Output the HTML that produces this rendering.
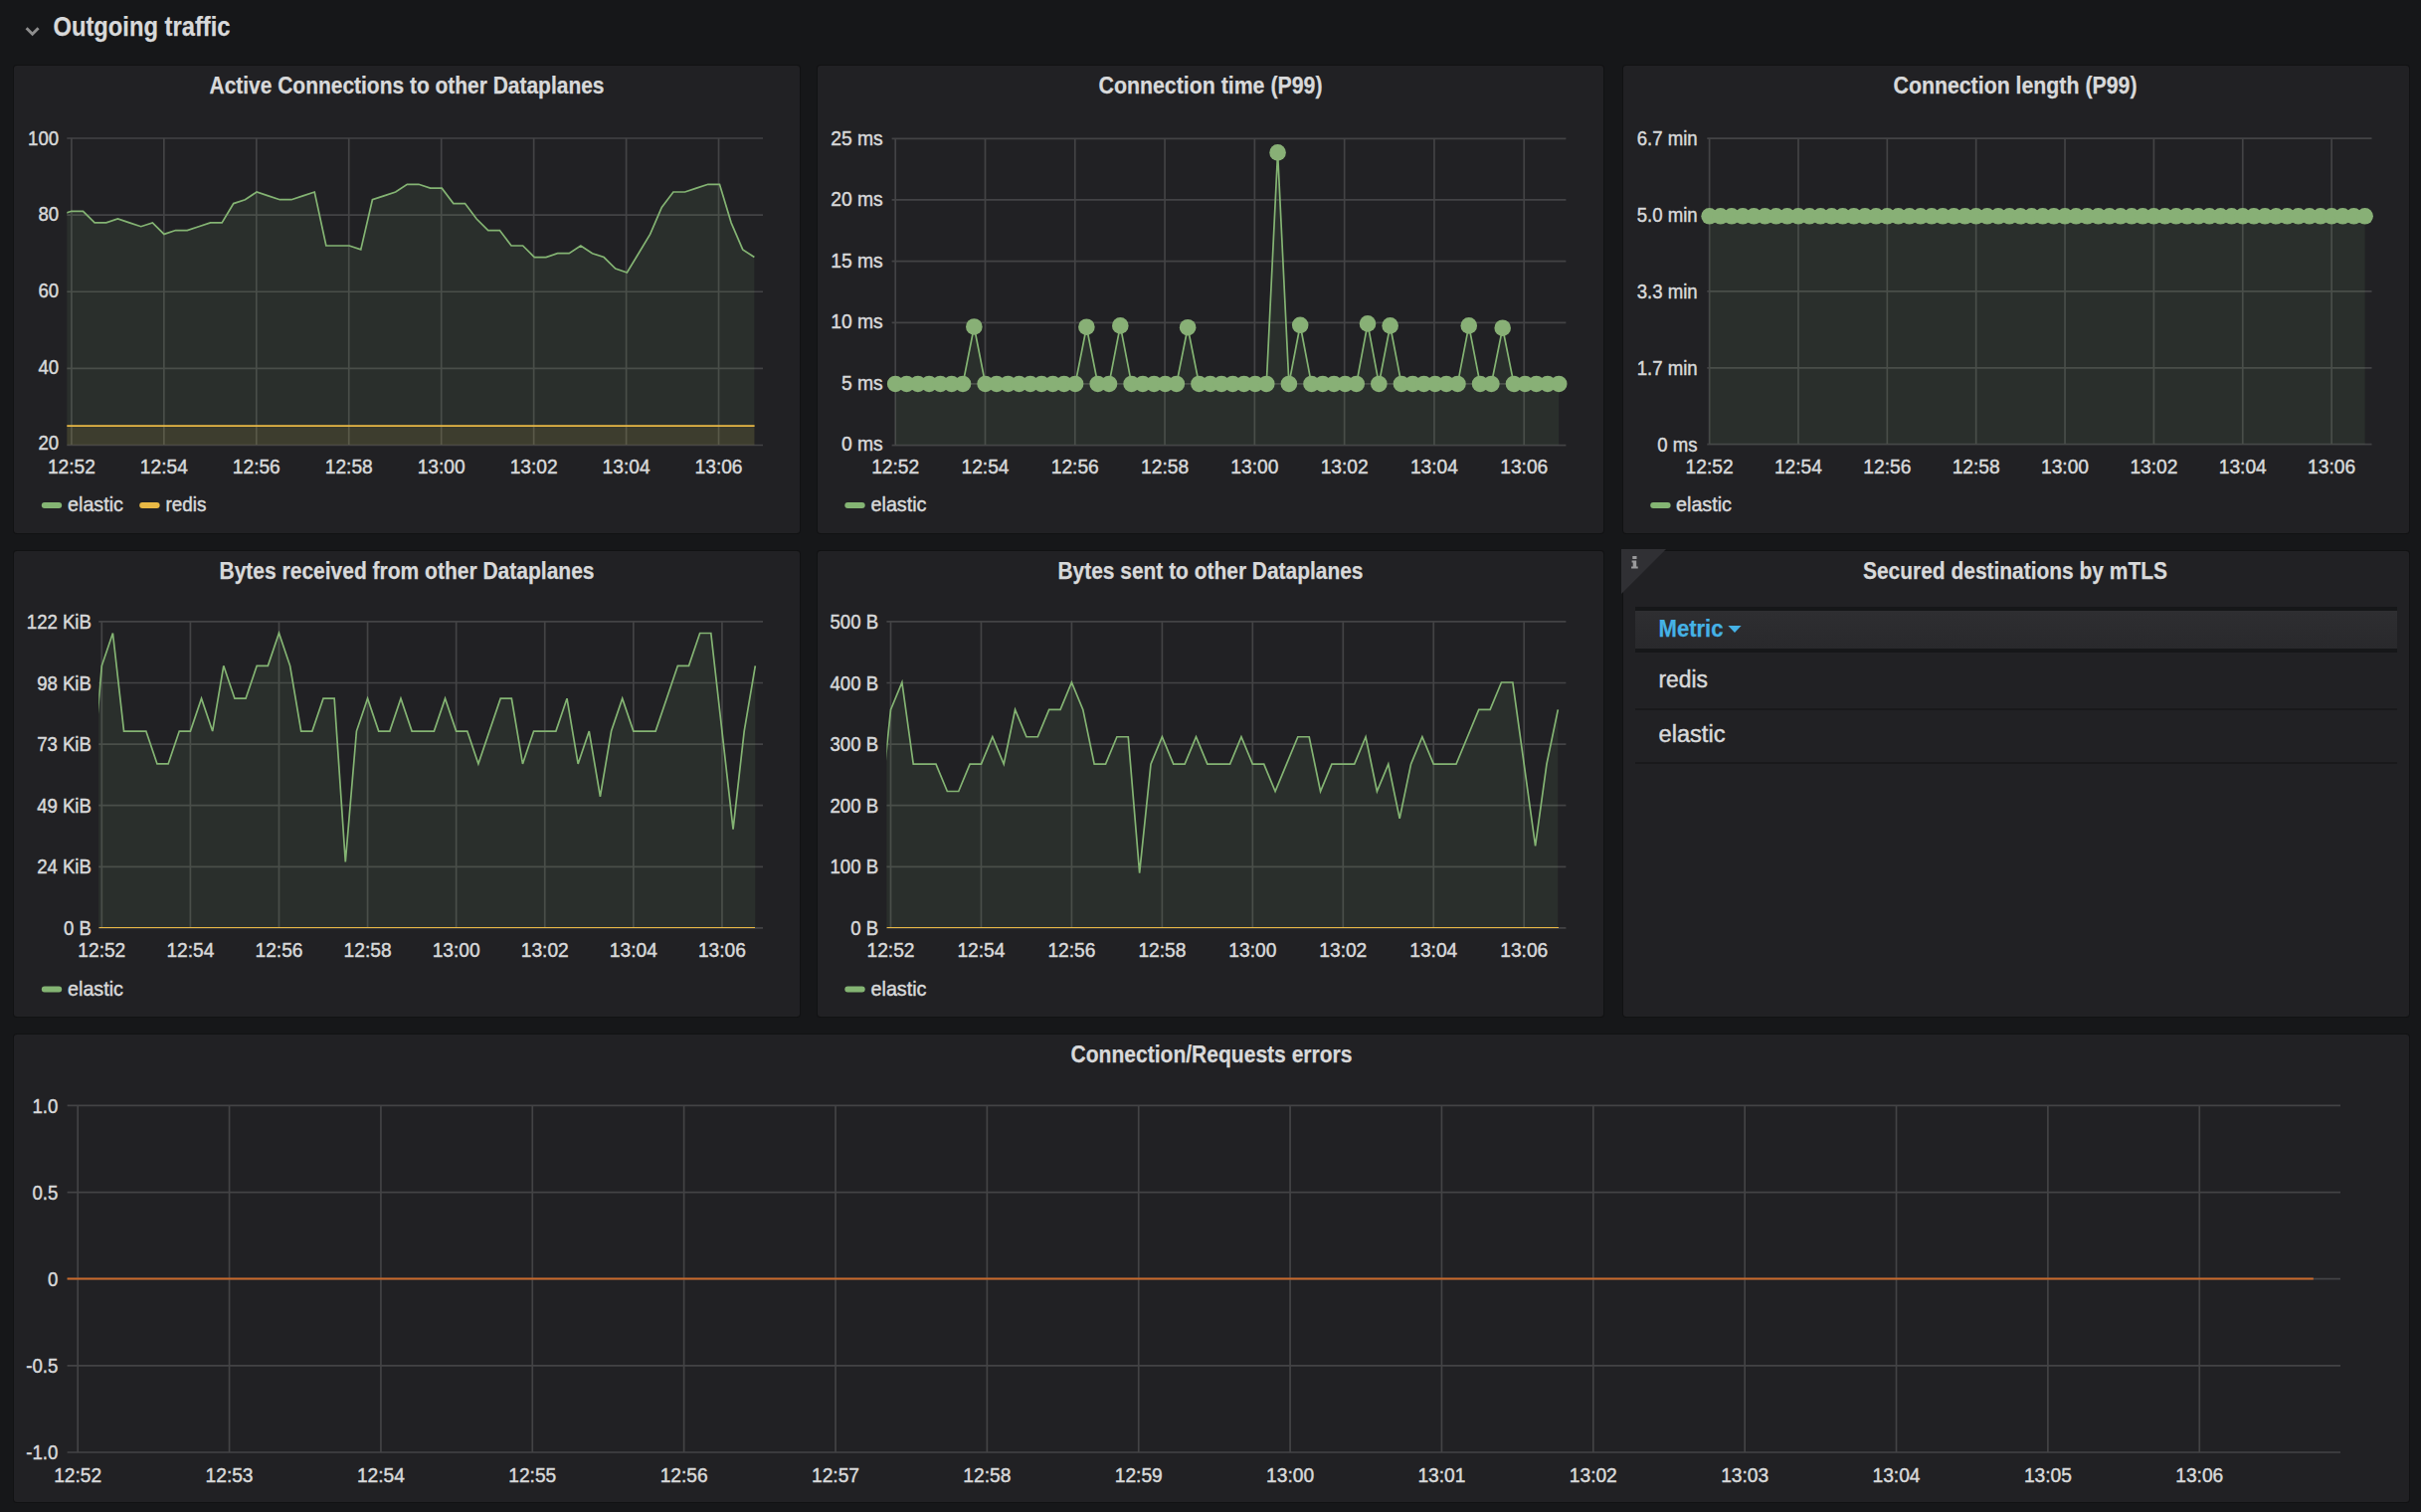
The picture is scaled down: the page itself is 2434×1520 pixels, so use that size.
<!DOCTYPE html>
<html><head><meta charset="utf-8"><title>Outgoing traffic</title>
<style>
html,body{margin:0;padding:0;background:#161719;}
body{width:2434px;height:1520px;overflow:hidden;position:relative;font-family:"Liberation Sans",sans-serif;}
.p{position:absolute;box-sizing:border-box;background:#212124;box-shadow:0 0 0 1px rgba(10,10,10,0.35);border-radius:3px;}
svg{position:absolute;left:0;top:0;}
text{font-family:"Liberation Sans",sans-serif;}
</style></head><body>
<div class="p" style="left:14px;top:66px;width:790px;height:470px"></div><div class="p" style="left:822px;top:66px;width:790px;height:470px"></div><div class="p" style="left:1632px;top:66px;width:790px;height:470px"></div><div class="p" style="left:14px;top:554px;width:790px;height:468px"></div><div class="p" style="left:822px;top:554px;width:790px;height:468px"></div><div class="p" style="left:1632px;top:554px;width:790px;height:468px"></div><div class="p" style="left:14px;top:1040px;width:2408px;height:470px"></div><div style="position:absolute;left:1644px;top:610px;width:766px;height:4px;background:#161719"></div><div style="position:absolute;left:1644px;top:614px;width:766px;height:38px;background:linear-gradient(#2e2e31,#29292c)"></div><div style="position:absolute;left:1644px;top:652px;width:766px;height:4px;background:#161719"></div><div style="position:absolute;left:1644px;top:712px;width:766px;height:2px;background:#19191b"></div><div style="position:absolute;left:1644px;top:766px;width:766px;height:2px;background:#19191b"></div>
<svg width="2434" height="1520" viewBox="0 0 2434 1520">
<path d="M26.6 28.3 L32.6 34.3 L38.6 28.3" stroke="#8e8e8e" stroke-width="2.9" fill="none"/>
<text x="53.5" y="36" font-size="27.8" font-weight="bold" fill="#d8d9da" text-anchor="start" textLength="178" lengthAdjust="spacingAndGlyphs" stroke="#d8d9da" stroke-width="0.25">Outgoing traffic</text>
<text x="409" y="94.2" font-size="24.4" font-weight="bold" fill="#d8d9da" text-anchor="middle" textLength="397" lengthAdjust="spacingAndGlyphs" stroke="#d8d9da" stroke-width="0.25">Active Connections to other Dataplanes</text>
<text x="1217" y="94.2" font-size="24.4" font-weight="bold" fill="#d8d9da" text-anchor="middle" textLength="225" lengthAdjust="spacingAndGlyphs" stroke="#d8d9da" stroke-width="0.25">Connection time (P99)</text>
<text x="2026" y="94.2" font-size="24.4" font-weight="bold" fill="#d8d9da" text-anchor="middle" textLength="245" lengthAdjust="spacingAndGlyphs" stroke="#d8d9da" stroke-width="0.25">Connection length (P99)</text>
<text x="409" y="582.2" font-size="24.4" font-weight="bold" fill="#d8d9da" text-anchor="middle" textLength="377" lengthAdjust="spacingAndGlyphs" stroke="#d8d9da" stroke-width="0.25">Bytes received from other Dataplanes</text>
<text x="1217" y="582.2" font-size="24.4" font-weight="bold" fill="#d8d9da" text-anchor="middle" textLength="307" lengthAdjust="spacingAndGlyphs" stroke="#d8d9da" stroke-width="0.25">Bytes sent to other Dataplanes</text>
<text x="2026" y="582.2" font-size="24.4" font-weight="bold" fill="#d8d9da" text-anchor="middle" textLength="306" lengthAdjust="spacingAndGlyphs" stroke="#d8d9da" stroke-width="0.25">Secured destinations by mTLS</text>
<text x="1218" y="1068.2" font-size="24.4" font-weight="bold" fill="#d8d9da" text-anchor="middle" textLength="283" lengthAdjust="spacingAndGlyphs" stroke="#d8d9da" stroke-width="0.25">Connection/Requests errors</text>
<path d="M67.3 139H767M67.3 216.12H767M67.3 293.25H767M67.3 370.38H767M67.3 447.5H767M71.9 139V447.5M164.85 139V447.5M257.8 139V447.5M350.75 139V447.5M443.7 139V447.5M536.65 139V447.5M629.6 139V447.5M722.55 139V447.5" stroke="#434345" stroke-width="1.7" fill="none"/>
<clipPath id="c1"><rect x="67.3" y="119" width="699.7" height="328.5"/></clipPath>
<g clip-path="url(#c1)">
<polygon points="60.27,216.14 71.9,212.28 83.54,212.28 95.17,223.85 106.81,223.85 118.44,220 130.07,223.85 141.71,227.71 153.34,223.85 164.98,235.42 176.62,231.56 188.25,231.56 199.88,227.71 211.52,223.85 223.16,223.85 234.79,204.57 246.43,200.72 258.06,193 269.69,196.86 281.33,200.72 292.97,200.72 304.6,196.86 316.24,193 327.87,246.99 339.5,246.99 351.14,246.99 362.77,250.84 374.41,200.72 386.04,196.86 397.68,193 409.32,185.29 420.95,185.29 432.59,189.15 444.22,189.15 455.86,204.57 467.49,204.57 479.12,220 490.76,231.56 502.39,231.56 514.03,246.99 525.66,246.99 537.3,258.56 548.93,258.56 560.57,254.7 572.21,254.7 583.84,246.99 595.48,254.7 607.11,258.56 618.75,270.12 630.38,273.98 642.01,254.7 653.65,235.42 665.28,208.43 676.92,193 688.55,193 700.19,189.15 711.82,185.29 723.46,185.29 735.09,223.85 746.73,250.84 758.37,258.56 758.37,447.5 60.27,447.5" fill="#84B473" fill-opacity="0.1"/>
<polyline points="60.27,216.14 71.9,212.28 83.54,212.28 95.17,223.85 106.81,223.85 118.44,220 130.07,223.85 141.71,227.71 153.34,223.85 164.98,235.42 176.62,231.56 188.25,231.56 199.88,227.71 211.52,223.85 223.16,223.85 234.79,204.57 246.43,200.72 258.06,193 269.69,196.86 281.33,200.72 292.97,200.72 304.6,196.86 316.24,193 327.87,246.99 339.5,246.99 351.14,246.99 362.77,250.84 374.41,200.72 386.04,196.86 397.68,193 409.32,185.29 420.95,185.29 432.59,189.15 444.22,189.15 455.86,204.57 467.49,204.57 479.12,220 490.76,231.56 502.39,231.56 514.03,246.99 525.66,246.99 537.3,258.56 548.93,258.56 560.57,254.7 572.21,254.7 583.84,246.99 595.48,254.7 607.11,258.56 618.75,270.12 630.38,273.98 642.01,254.7 653.65,235.42 665.28,208.43 676.92,193 688.55,193 700.19,189.15 711.82,185.29 723.46,185.29 735.09,223.85 746.73,250.84 758.37,258.56" fill="none" stroke="#84B473" stroke-width="1.7" stroke-linejoin="miter"/>
</g>
<clipPath id="c2"><rect x="67.3" y="119" width="699.7" height="328.5"/></clipPath>
<g clip-path="url(#c2)">
<polygon points="60.3,428.2 758.6,428.2 758.6,447.5 60.3,447.5" fill="#E8B845" fill-opacity="0.1"/>
<polyline points="60.3,428.2 758.6,428.2" fill="none" stroke="#E8B845" stroke-width="1.7" stroke-linejoin="miter"/>
</g>
<text transform="translate(59.1 146.35) scale(0.93 1)" font-size="20" font-weight="normal" fill="#d8d9da" text-anchor="end" stroke="#d8d9da" stroke-width="0.45">100</text>
<text transform="translate(59.1 222.32) scale(0.93 1)" font-size="20" font-weight="normal" fill="#d8d9da" text-anchor="end" stroke="#d8d9da" stroke-width="0.45">80</text>
<text transform="translate(59.1 299.15) scale(0.93 1)" font-size="20" font-weight="normal" fill="#d8d9da" text-anchor="end" stroke="#d8d9da" stroke-width="0.45">60</text>
<text transform="translate(59.1 376.08) scale(0.93 1)" font-size="20" font-weight="normal" fill="#d8d9da" text-anchor="end" stroke="#d8d9da" stroke-width="0.45">40</text>
<text transform="translate(59.1 452.3) scale(0.93 1)" font-size="20" font-weight="normal" fill="#d8d9da" text-anchor="end" stroke="#d8d9da" stroke-width="0.45">20</text>
<text x="71.9" y="476.1" font-size="20" font-weight="normal" fill="#d8d9da" text-anchor="middle" textLength="48" lengthAdjust="spacingAndGlyphs" stroke="#d8d9da" stroke-width="0.45">12:52</text>
<text x="164.85" y="476.1" font-size="20" font-weight="normal" fill="#d8d9da" text-anchor="middle" textLength="48" lengthAdjust="spacingAndGlyphs" stroke="#d8d9da" stroke-width="0.45">12:54</text>
<text x="257.8" y="476.1" font-size="20" font-weight="normal" fill="#d8d9da" text-anchor="middle" textLength="48" lengthAdjust="spacingAndGlyphs" stroke="#d8d9da" stroke-width="0.45">12:56</text>
<text x="350.75" y="476.1" font-size="20" font-weight="normal" fill="#d8d9da" text-anchor="middle" textLength="48" lengthAdjust="spacingAndGlyphs" stroke="#d8d9da" stroke-width="0.45">12:58</text>
<text x="443.7" y="476.1" font-size="20" font-weight="normal" fill="#d8d9da" text-anchor="middle" textLength="48" lengthAdjust="spacingAndGlyphs" stroke="#d8d9da" stroke-width="0.45">13:00</text>
<text x="536.65" y="476.1" font-size="20" font-weight="normal" fill="#d8d9da" text-anchor="middle" textLength="48" lengthAdjust="spacingAndGlyphs" stroke="#d8d9da" stroke-width="0.45">13:02</text>
<text x="629.6" y="476.1" font-size="20" font-weight="normal" fill="#d8d9da" text-anchor="middle" textLength="48" lengthAdjust="spacingAndGlyphs" stroke="#d8d9da" stroke-width="0.45">13:04</text>
<text x="722.55" y="476.1" font-size="20" font-weight="normal" fill="#d8d9da" text-anchor="middle" textLength="48" lengthAdjust="spacingAndGlyphs" stroke="#d8d9da" stroke-width="0.45">13:06</text>
<rect x="41.8" y="505" width="20.4" height="6" rx="3" fill="#84B473"/>
<text x="68" y="514" font-size="21" font-weight="normal" fill="#d8d9da" text-anchor="start" textLength="56" lengthAdjust="spacingAndGlyphs" stroke="#d8d9da" stroke-width="0.45">elastic</text>
<rect x="140.2" y="505" width="20.4" height="6" rx="3" fill="#E8B845"/>
<text x="166.5" y="514" font-size="21" font-weight="normal" fill="#d8d9da" text-anchor="start" textLength="41" lengthAdjust="spacingAndGlyphs" stroke="#d8d9da" stroke-width="0.45">redis</text>
<path d="M896.6 139.3H1574.4M896.6 200.96H1574.4M896.6 262.62H1574.4M896.6 324.28H1574.4M896.6 385.94H1574.4M896.6 447.6H1574.4M900.2 139.3V447.6M990.49 139.3V447.6M1080.78 139.3V447.6M1171.07 139.3V447.6M1261.36 139.3V447.6M1351.65 139.3V447.6M1441.94 139.3V447.6M1532.23 139.3V447.6" stroke="#434345" stroke-width="1.7" fill="none"/>
<clipPath id="c3"><rect x="896.6" y="119.3" width="677.8" height="328.3"/></clipPath>
<g clip-path="url(#c3)">
<polygon points="900.2,385.95 911.5,385.95 922.81,385.95 934.12,385.95 945.42,385.95 956.73,385.95 968.03,385.95 979.34,328.49 990.64,385.95 1001.95,385.95 1013.25,385.95 1024.56,385.95 1035.86,385.95 1047.16,385.95 1058.47,385.95 1069.78,385.95 1081.08,385.95 1092.38,328.74 1103.69,385.95 1115,385.95 1126.3,327.38 1137.61,385.95 1148.91,385.95 1160.22,385.95 1171.52,385.95 1182.83,385.95 1194.13,329.23 1205.43,385.95 1216.74,385.95 1228.05,385.95 1239.35,385.95 1250.65,385.95 1261.96,385.95 1273.27,385.95 1284.57,153.41 1295.88,385.95 1307.18,326.77 1318.49,385.95 1329.79,385.95 1341.1,385.95 1352.4,385.95 1363.7,385.95 1375.01,325.41 1386.32,385.95 1397.62,327.38 1408.92,385.95 1420.23,385.95 1431.54,385.95 1442.84,385.95 1454.14,385.95 1465.45,385.95 1476.76,327.38 1488.06,385.95 1499.37,385.95 1510.67,329.73 1521.97,385.95 1533.28,385.95 1544.59,385.95 1555.89,385.95 1567.2,385.95 1567.2,447.6 900.2,447.6" fill="#84B473" fill-opacity="0.1"/>
<polyline points="900.2,385.95 911.5,385.95 922.81,385.95 934.12,385.95 945.42,385.95 956.73,385.95 968.03,385.95 979.34,328.49 990.64,385.95 1001.95,385.95 1013.25,385.95 1024.56,385.95 1035.86,385.95 1047.16,385.95 1058.47,385.95 1069.78,385.95 1081.08,385.95 1092.38,328.74 1103.69,385.95 1115,385.95 1126.3,327.38 1137.61,385.95 1148.91,385.95 1160.22,385.95 1171.52,385.95 1182.83,385.95 1194.13,329.23 1205.43,385.95 1216.74,385.95 1228.05,385.95 1239.35,385.95 1250.65,385.95 1261.96,385.95 1273.27,385.95 1284.57,153.41 1295.88,385.95 1307.18,326.77 1318.49,385.95 1329.79,385.95 1341.1,385.95 1352.4,385.95 1363.7,385.95 1375.01,325.41 1386.32,385.95 1397.62,327.38 1408.92,385.95 1420.23,385.95 1431.54,385.95 1442.84,385.95 1454.14,385.95 1465.45,385.95 1476.76,327.38 1488.06,385.95 1499.37,385.95 1510.67,329.73 1521.97,385.95 1533.28,385.95 1544.59,385.95 1555.89,385.95 1567.2,385.95" fill="none" stroke="#84B473" stroke-width="1.7" stroke-linejoin="miter"/>
</g>
<circle cx="900.2" cy="385.95" r="8.3" fill="#88B076"/><circle cx="911.5" cy="385.95" r="8.3" fill="#88B076"/><circle cx="922.81" cy="385.95" r="8.3" fill="#88B076"/><circle cx="934.12" cy="385.95" r="8.3" fill="#88B076"/><circle cx="945.42" cy="385.95" r="8.3" fill="#88B076"/><circle cx="956.73" cy="385.95" r="8.3" fill="#88B076"/><circle cx="968.03" cy="385.95" r="8.3" fill="#88B076"/><circle cx="979.34" cy="328.49" r="8.3" fill="#88B076"/><circle cx="990.64" cy="385.95" r="8.3" fill="#88B076"/><circle cx="1001.95" cy="385.95" r="8.3" fill="#88B076"/><circle cx="1013.25" cy="385.95" r="8.3" fill="#88B076"/><circle cx="1024.56" cy="385.95" r="8.3" fill="#88B076"/><circle cx="1035.86" cy="385.95" r="8.3" fill="#88B076"/><circle cx="1047.16" cy="385.95" r="8.3" fill="#88B076"/><circle cx="1058.47" cy="385.95" r="8.3" fill="#88B076"/><circle cx="1069.78" cy="385.95" r="8.3" fill="#88B076"/><circle cx="1081.08" cy="385.95" r="8.3" fill="#88B076"/><circle cx="1092.38" cy="328.74" r="8.3" fill="#88B076"/><circle cx="1103.69" cy="385.95" r="8.3" fill="#88B076"/><circle cx="1115" cy="385.95" r="8.3" fill="#88B076"/><circle cx="1126.3" cy="327.38" r="8.3" fill="#88B076"/><circle cx="1137.61" cy="385.95" r="8.3" fill="#88B076"/><circle cx="1148.91" cy="385.95" r="8.3" fill="#88B076"/><circle cx="1160.22" cy="385.95" r="8.3" fill="#88B076"/><circle cx="1171.52" cy="385.95" r="8.3" fill="#88B076"/><circle cx="1182.83" cy="385.95" r="8.3" fill="#88B076"/><circle cx="1194.13" cy="329.23" r="8.3" fill="#88B076"/><circle cx="1205.43" cy="385.95" r="8.3" fill="#88B076"/><circle cx="1216.74" cy="385.95" r="8.3" fill="#88B076"/><circle cx="1228.05" cy="385.95" r="8.3" fill="#88B076"/><circle cx="1239.35" cy="385.95" r="8.3" fill="#88B076"/><circle cx="1250.65" cy="385.95" r="8.3" fill="#88B076"/><circle cx="1261.96" cy="385.95" r="8.3" fill="#88B076"/><circle cx="1273.27" cy="385.95" r="8.3" fill="#88B076"/><circle cx="1284.57" cy="153.41" r="8.3" fill="#88B076"/><circle cx="1295.88" cy="385.95" r="8.3" fill="#88B076"/><circle cx="1307.18" cy="326.77" r="8.3" fill="#88B076"/><circle cx="1318.49" cy="385.95" r="8.3" fill="#88B076"/><circle cx="1329.79" cy="385.95" r="8.3" fill="#88B076"/><circle cx="1341.1" cy="385.95" r="8.3" fill="#88B076"/><circle cx="1352.4" cy="385.95" r="8.3" fill="#88B076"/><circle cx="1363.7" cy="385.95" r="8.3" fill="#88B076"/><circle cx="1375.01" cy="325.41" r="8.3" fill="#88B076"/><circle cx="1386.32" cy="385.95" r="8.3" fill="#88B076"/><circle cx="1397.62" cy="327.38" r="8.3" fill="#88B076"/><circle cx="1408.92" cy="385.95" r="8.3" fill="#88B076"/><circle cx="1420.23" cy="385.95" r="8.3" fill="#88B076"/><circle cx="1431.54" cy="385.95" r="8.3" fill="#88B076"/><circle cx="1442.84" cy="385.95" r="8.3" fill="#88B076"/><circle cx="1454.14" cy="385.95" r="8.3" fill="#88B076"/><circle cx="1465.45" cy="385.95" r="8.3" fill="#88B076"/><circle cx="1476.76" cy="327.38" r="8.3" fill="#88B076"/><circle cx="1488.06" cy="385.95" r="8.3" fill="#88B076"/><circle cx="1499.37" cy="385.95" r="8.3" fill="#88B076"/><circle cx="1510.67" cy="329.73" r="8.3" fill="#88B076"/><circle cx="1521.97" cy="385.95" r="8.3" fill="#88B076"/><circle cx="1533.28" cy="385.95" r="8.3" fill="#88B076"/><circle cx="1544.59" cy="385.95" r="8.3" fill="#88B076"/><circle cx="1555.89" cy="385.95" r="8.3" fill="#88B076"/><circle cx="1567.2" cy="385.95" r="8.3" fill="#88B076"/>
<text transform="translate(887.7 146.1) scale(0.965 1)" font-size="20" font-weight="normal" fill="#d8d9da" text-anchor="end" stroke="#d8d9da" stroke-width="0.45">25 ms</text>
<text transform="translate(887.7 207.06) scale(0.965 1)" font-size="20" font-weight="normal" fill="#d8d9da" text-anchor="end" stroke="#d8d9da" stroke-width="0.45">20 ms</text>
<text transform="translate(887.7 268.72) scale(0.965 1)" font-size="20" font-weight="normal" fill="#d8d9da" text-anchor="end" stroke="#d8d9da" stroke-width="0.45">15 ms</text>
<text transform="translate(887.7 330.38) scale(0.965 1)" font-size="20" font-weight="normal" fill="#d8d9da" text-anchor="end" stroke="#d8d9da" stroke-width="0.45">10 ms</text>
<text transform="translate(887.7 392.04) scale(0.965 1)" font-size="20" font-weight="normal" fill="#d8d9da" text-anchor="end" stroke="#d8d9da" stroke-width="0.45">5 ms</text>
<text transform="translate(887.7 453.2) scale(0.965 1)" font-size="20" font-weight="normal" fill="#d8d9da" text-anchor="end" stroke="#d8d9da" stroke-width="0.45">0 ms</text>
<text x="900.2" y="476.1" font-size="20" font-weight="normal" fill="#d8d9da" text-anchor="middle" textLength="48" lengthAdjust="spacingAndGlyphs" stroke="#d8d9da" stroke-width="0.45">12:52</text>
<text x="990.49" y="476.1" font-size="20" font-weight="normal" fill="#d8d9da" text-anchor="middle" textLength="48" lengthAdjust="spacingAndGlyphs" stroke="#d8d9da" stroke-width="0.45">12:54</text>
<text x="1080.78" y="476.1" font-size="20" font-weight="normal" fill="#d8d9da" text-anchor="middle" textLength="48" lengthAdjust="spacingAndGlyphs" stroke="#d8d9da" stroke-width="0.45">12:56</text>
<text x="1171.07" y="476.1" font-size="20" font-weight="normal" fill="#d8d9da" text-anchor="middle" textLength="48" lengthAdjust="spacingAndGlyphs" stroke="#d8d9da" stroke-width="0.45">12:58</text>
<text x="1261.36" y="476.1" font-size="20" font-weight="normal" fill="#d8d9da" text-anchor="middle" textLength="48" lengthAdjust="spacingAndGlyphs" stroke="#d8d9da" stroke-width="0.45">13:00</text>
<text x="1351.65" y="476.1" font-size="20" font-weight="normal" fill="#d8d9da" text-anchor="middle" textLength="48" lengthAdjust="spacingAndGlyphs" stroke="#d8d9da" stroke-width="0.45">13:02</text>
<text x="1441.94" y="476.1" font-size="20" font-weight="normal" fill="#d8d9da" text-anchor="middle" textLength="48" lengthAdjust="spacingAndGlyphs" stroke="#d8d9da" stroke-width="0.45">13:04</text>
<text x="1532.23" y="476.1" font-size="20" font-weight="normal" fill="#d8d9da" text-anchor="middle" textLength="48" lengthAdjust="spacingAndGlyphs" stroke="#d8d9da" stroke-width="0.45">13:06</text>
<rect x="849.3" y="505" width="20.4" height="6" rx="3" fill="#84B473"/>
<text x="875.5" y="514" font-size="21" font-weight="normal" fill="#d8d9da" text-anchor="start" textLength="56" lengthAdjust="spacingAndGlyphs" stroke="#d8d9da" stroke-width="0.45">elastic</text>
<path d="M1716.3 139.2H2384.5M1716.3 216.07H2384.5M1716.3 292.95H2384.5M1716.3 369.82H2384.5M1716.3 446.7H2384.5M1718.6 139.2V446.7M1807.96 139.2V446.7M1897.32 139.2V446.7M1986.68 139.2V446.7M2076.04 139.2V446.7M2165.4 139.2V446.7M2254.76 139.2V446.7M2344.12 139.2V446.7" stroke="#434345" stroke-width="1.7" fill="none"/>
<clipPath id="c4"><rect x="1716.3" y="119.2" width="668.2" height="327.5"/></clipPath>
<g clip-path="url(#c4)">
<polygon points="1718.6,217.3 1729.77,217.3 1740.94,217.3 1752.11,217.3 1763.28,217.3 1774.45,217.3 1785.62,217.3 1796.79,217.3 1807.96,217.3 1819.13,217.3 1830.3,217.3 1841.47,217.3 1852.64,217.3 1863.81,217.3 1874.98,217.3 1886.15,217.3 1897.32,217.3 1908.49,217.3 1919.66,217.3 1930.83,217.3 1942,217.3 1953.17,217.3 1964.34,217.3 1975.51,217.3 1986.68,217.3 1997.85,217.3 2009.02,217.3 2020.19,217.3 2031.36,217.3 2042.53,217.3 2053.7,217.3 2064.87,217.3 2076.04,217.3 2087.21,217.3 2098.38,217.3 2109.55,217.3 2120.72,217.3 2131.89,217.3 2143.06,217.3 2154.23,217.3 2165.4,217.3 2176.57,217.3 2187.74,217.3 2198.91,217.3 2210.08,217.3 2221.25,217.3 2232.42,217.3 2243.59,217.3 2254.76,217.3 2265.93,217.3 2277.1,217.3 2288.27,217.3 2299.44,217.3 2310.61,217.3 2321.78,217.3 2332.95,217.3 2344.12,217.3 2355.29,217.3 2366.46,217.3 2377.63,217.3 2377.63,446.7 1718.6,446.7" fill="#84B473" fill-opacity="0.1"/>
<polyline points="1718.6,217.3 1729.77,217.3 1740.94,217.3 1752.11,217.3 1763.28,217.3 1774.45,217.3 1785.62,217.3 1796.79,217.3 1807.96,217.3 1819.13,217.3 1830.3,217.3 1841.47,217.3 1852.64,217.3 1863.81,217.3 1874.98,217.3 1886.15,217.3 1897.32,217.3 1908.49,217.3 1919.66,217.3 1930.83,217.3 1942,217.3 1953.17,217.3 1964.34,217.3 1975.51,217.3 1986.68,217.3 1997.85,217.3 2009.02,217.3 2020.19,217.3 2031.36,217.3 2042.53,217.3 2053.7,217.3 2064.87,217.3 2076.04,217.3 2087.21,217.3 2098.38,217.3 2109.55,217.3 2120.72,217.3 2131.89,217.3 2143.06,217.3 2154.23,217.3 2165.4,217.3 2176.57,217.3 2187.74,217.3 2198.91,217.3 2210.08,217.3 2221.25,217.3 2232.42,217.3 2243.59,217.3 2254.76,217.3 2265.93,217.3 2277.1,217.3 2288.27,217.3 2299.44,217.3 2310.61,217.3 2321.78,217.3 2332.95,217.3 2344.12,217.3 2355.29,217.3 2366.46,217.3 2377.63,217.3" fill="none" stroke="#84B473" stroke-width="1.7" stroke-linejoin="miter"/>
</g>
<circle cx="1718.6" cy="217.3" r="8.3" fill="#88B076"/><circle cx="1729.77" cy="217.3" r="8.3" fill="#88B076"/><circle cx="1740.94" cy="217.3" r="8.3" fill="#88B076"/><circle cx="1752.11" cy="217.3" r="8.3" fill="#88B076"/><circle cx="1763.28" cy="217.3" r="8.3" fill="#88B076"/><circle cx="1774.45" cy="217.3" r="8.3" fill="#88B076"/><circle cx="1785.62" cy="217.3" r="8.3" fill="#88B076"/><circle cx="1796.79" cy="217.3" r="8.3" fill="#88B076"/><circle cx="1807.96" cy="217.3" r="8.3" fill="#88B076"/><circle cx="1819.13" cy="217.3" r="8.3" fill="#88B076"/><circle cx="1830.3" cy="217.3" r="8.3" fill="#88B076"/><circle cx="1841.47" cy="217.3" r="8.3" fill="#88B076"/><circle cx="1852.64" cy="217.3" r="8.3" fill="#88B076"/><circle cx="1863.81" cy="217.3" r="8.3" fill="#88B076"/><circle cx="1874.98" cy="217.3" r="8.3" fill="#88B076"/><circle cx="1886.15" cy="217.3" r="8.3" fill="#88B076"/><circle cx="1897.32" cy="217.3" r="8.3" fill="#88B076"/><circle cx="1908.49" cy="217.3" r="8.3" fill="#88B076"/><circle cx="1919.66" cy="217.3" r="8.3" fill="#88B076"/><circle cx="1930.83" cy="217.3" r="8.3" fill="#88B076"/><circle cx="1942" cy="217.3" r="8.3" fill="#88B076"/><circle cx="1953.17" cy="217.3" r="8.3" fill="#88B076"/><circle cx="1964.34" cy="217.3" r="8.3" fill="#88B076"/><circle cx="1975.51" cy="217.3" r="8.3" fill="#88B076"/><circle cx="1986.68" cy="217.3" r="8.3" fill="#88B076"/><circle cx="1997.85" cy="217.3" r="8.3" fill="#88B076"/><circle cx="2009.02" cy="217.3" r="8.3" fill="#88B076"/><circle cx="2020.19" cy="217.3" r="8.3" fill="#88B076"/><circle cx="2031.36" cy="217.3" r="8.3" fill="#88B076"/><circle cx="2042.53" cy="217.3" r="8.3" fill="#88B076"/><circle cx="2053.7" cy="217.3" r="8.3" fill="#88B076"/><circle cx="2064.87" cy="217.3" r="8.3" fill="#88B076"/><circle cx="2076.04" cy="217.3" r="8.3" fill="#88B076"/><circle cx="2087.21" cy="217.3" r="8.3" fill="#88B076"/><circle cx="2098.38" cy="217.3" r="8.3" fill="#88B076"/><circle cx="2109.55" cy="217.3" r="8.3" fill="#88B076"/><circle cx="2120.72" cy="217.3" r="8.3" fill="#88B076"/><circle cx="2131.89" cy="217.3" r="8.3" fill="#88B076"/><circle cx="2143.06" cy="217.3" r="8.3" fill="#88B076"/><circle cx="2154.23" cy="217.3" r="8.3" fill="#88B076"/><circle cx="2165.4" cy="217.3" r="8.3" fill="#88B076"/><circle cx="2176.57" cy="217.3" r="8.3" fill="#88B076"/><circle cx="2187.74" cy="217.3" r="8.3" fill="#88B076"/><circle cx="2198.91" cy="217.3" r="8.3" fill="#88B076"/><circle cx="2210.08" cy="217.3" r="8.3" fill="#88B076"/><circle cx="2221.25" cy="217.3" r="8.3" fill="#88B076"/><circle cx="2232.42" cy="217.3" r="8.3" fill="#88B076"/><circle cx="2243.59" cy="217.3" r="8.3" fill="#88B076"/><circle cx="2254.76" cy="217.3" r="8.3" fill="#88B076"/><circle cx="2265.93" cy="217.3" r="8.3" fill="#88B076"/><circle cx="2277.1" cy="217.3" r="8.3" fill="#88B076"/><circle cx="2288.27" cy="217.3" r="8.3" fill="#88B076"/><circle cx="2299.44" cy="217.3" r="8.3" fill="#88B076"/><circle cx="2310.61" cy="217.3" r="8.3" fill="#88B076"/><circle cx="2321.78" cy="217.3" r="8.3" fill="#88B076"/><circle cx="2332.95" cy="217.3" r="8.3" fill="#88B076"/><circle cx="2344.12" cy="217.3" r="8.3" fill="#88B076"/><circle cx="2355.29" cy="217.3" r="8.3" fill="#88B076"/><circle cx="2366.46" cy="217.3" r="8.3" fill="#88B076"/><circle cx="2377.63" cy="217.3" r="8.3" fill="#88B076"/>
<text transform="translate(1706.6 146.3) scale(0.93 1)" font-size="20" font-weight="normal" fill="#d8d9da" text-anchor="end" stroke="#d8d9da" stroke-width="0.45">6.7 min</text>
<text transform="translate(1706.6 223.17) scale(0.93 1)" font-size="20" font-weight="normal" fill="#d8d9da" text-anchor="end" stroke="#d8d9da" stroke-width="0.45">5.0 min</text>
<text transform="translate(1706.6 300.05) scale(0.93 1)" font-size="20" font-weight="normal" fill="#d8d9da" text-anchor="end" stroke="#d8d9da" stroke-width="0.45">3.3 min</text>
<text transform="translate(1706.6 376.93) scale(0.93 1)" font-size="20" font-weight="normal" fill="#d8d9da" text-anchor="end" stroke="#d8d9da" stroke-width="0.45">1.7 min</text>
<text transform="translate(1706.6 453.8) scale(0.93 1)" font-size="20" font-weight="normal" fill="#d8d9da" text-anchor="end" stroke="#d8d9da" stroke-width="0.45">0 ms</text>
<text x="1718.6" y="476.1" font-size="20" font-weight="normal" fill="#d8d9da" text-anchor="middle" textLength="48" lengthAdjust="spacingAndGlyphs" stroke="#d8d9da" stroke-width="0.45">12:52</text>
<text x="1807.96" y="476.1" font-size="20" font-weight="normal" fill="#d8d9da" text-anchor="middle" textLength="48" lengthAdjust="spacingAndGlyphs" stroke="#d8d9da" stroke-width="0.45">12:54</text>
<text x="1897.32" y="476.1" font-size="20" font-weight="normal" fill="#d8d9da" text-anchor="middle" textLength="48" lengthAdjust="spacingAndGlyphs" stroke="#d8d9da" stroke-width="0.45">12:56</text>
<text x="1986.68" y="476.1" font-size="20" font-weight="normal" fill="#d8d9da" text-anchor="middle" textLength="48" lengthAdjust="spacingAndGlyphs" stroke="#d8d9da" stroke-width="0.45">12:58</text>
<text x="2076.04" y="476.1" font-size="20" font-weight="normal" fill="#d8d9da" text-anchor="middle" textLength="48" lengthAdjust="spacingAndGlyphs" stroke="#d8d9da" stroke-width="0.45">13:00</text>
<text x="2165.4" y="476.1" font-size="20" font-weight="normal" fill="#d8d9da" text-anchor="middle" textLength="48" lengthAdjust="spacingAndGlyphs" stroke="#d8d9da" stroke-width="0.45">13:02</text>
<text x="2254.76" y="476.1" font-size="20" font-weight="normal" fill="#d8d9da" text-anchor="middle" textLength="48" lengthAdjust="spacingAndGlyphs" stroke="#d8d9da" stroke-width="0.45">13:04</text>
<text x="2344.12" y="476.1" font-size="20" font-weight="normal" fill="#d8d9da" text-anchor="middle" textLength="48" lengthAdjust="spacingAndGlyphs" stroke="#d8d9da" stroke-width="0.45">13:06</text>
<rect x="1659.2" y="505" width="20.4" height="6" rx="3" fill="#84B473"/>
<text x="1685" y="514" font-size="21" font-weight="normal" fill="#d8d9da" text-anchor="start" textLength="56" lengthAdjust="spacingAndGlyphs" stroke="#d8d9da" stroke-width="0.45">elastic</text>
<path d="M99.2 624.9H767M99.2 686.5H767M99.2 748.1H767M99.2 809.7H767M99.2 871.3H767M99.2 932.9H767M102.3 624.9V932.9M191.39 624.9V932.9M280.48 624.9V932.9M369.57 624.9V932.9M458.66 624.9V932.9M547.75 624.9V932.9M636.84 624.9V932.9M725.93 624.9V932.9" stroke="#434345" stroke-width="1.7" fill="none"/>
<clipPath id="c5"><rect x="99.2" y="604.9" width="667.8" height="328"/></clipPath>
<g clip-path="url(#c5)">
<polygon points="91.16,800.75 102.3,669.35 113.44,636.5 124.57,735.05 135.71,735.05 146.84,735.05 157.98,767.9 169.12,767.9 180.25,735.05 191.39,735.05 202.52,702.2 213.66,735.05 224.8,669.35 235.93,702.2 247.07,702.2 258.2,669.35 269.34,669.35 280.48,636.5 291.61,669.35 302.75,735.05 313.88,735.05 325.02,702.2 336.16,702.2 347.29,866.45 358.43,735.05 369.56,702.2 380.7,735.05 391.84,735.05 402.97,702.2 414.11,735.05 425.24,735.05 436.38,735.05 447.52,702.2 458.65,735.05 469.79,735.05 480.92,767.9 492.06,735.05 503.2,702.2 514.33,702.2 525.47,767.9 536.6,735.05 547.74,735.05 558.88,735.05 570.01,702.2 581.15,767.9 592.28,735.05 603.42,800.75 614.56,735.05 625.69,702.2 636.83,735.05 647.96,735.05 659.1,735.05 670.24,702.2 681.37,669.35 692.51,669.35 703.64,636.5 714.78,636.5 725.92,735.05 737.05,833.6 748.19,735.05 759.32,669.35 759.32,932.9 91.16,932.9" fill="#84B473" fill-opacity="0.1"/>
<polyline points="91.16,800.75 102.3,669.35 113.44,636.5 124.57,735.05 135.71,735.05 146.84,735.05 157.98,767.9 169.12,767.9 180.25,735.05 191.39,735.05 202.52,702.2 213.66,735.05 224.8,669.35 235.93,702.2 247.07,702.2 258.2,669.35 269.34,669.35 280.48,636.5 291.61,669.35 302.75,735.05 313.88,735.05 325.02,702.2 336.16,702.2 347.29,866.45 358.43,735.05 369.56,702.2 380.7,735.05 391.84,735.05 402.97,702.2 414.11,735.05 425.24,735.05 436.38,735.05 447.52,702.2 458.65,735.05 469.79,735.05 480.92,767.9 492.06,735.05 503.2,702.2 514.33,702.2 525.47,767.9 536.6,735.05 547.74,735.05 558.88,735.05 570.01,702.2 581.15,767.9 592.28,735.05 603.42,800.75 614.56,735.05 625.69,702.2 636.83,735.05 647.96,735.05 659.1,735.05 670.24,702.2 681.37,669.35 692.51,669.35 703.64,636.5 714.78,636.5 725.92,735.05 737.05,833.6 748.19,735.05 759.32,669.35" fill="none" stroke="#84B473" stroke-width="1.7" stroke-linejoin="miter"/>
</g>
<clipPath id="c6"><rect x="99.2" y="604.9" width="667.8" height="328"/></clipPath>
<g clip-path="url(#c6)">
<polyline points="99.5,932.9 759,932.9" fill="none" stroke="#E8B845" stroke-width="1.7" stroke-linejoin="miter"/>
</g>
<text transform="translate(91.9 632) scale(0.93 1)" font-size="20" font-weight="normal" fill="#d8d9da" text-anchor="end" stroke="#d8d9da" stroke-width="0.45">122 KiB</text>
<text transform="translate(91.9 693.6) scale(0.93 1)" font-size="20" font-weight="normal" fill="#d8d9da" text-anchor="end" stroke="#d8d9da" stroke-width="0.45">98 KiB</text>
<text transform="translate(91.9 755.2) scale(0.93 1)" font-size="20" font-weight="normal" fill="#d8d9da" text-anchor="end" stroke="#d8d9da" stroke-width="0.45">73 KiB</text>
<text transform="translate(91.9 816.8) scale(0.93 1)" font-size="20" font-weight="normal" fill="#d8d9da" text-anchor="end" stroke="#d8d9da" stroke-width="0.45">49 KiB</text>
<text transform="translate(91.9 878.4) scale(0.93 1)" font-size="20" font-weight="normal" fill="#d8d9da" text-anchor="end" stroke="#d8d9da" stroke-width="0.45">24 KiB</text>
<text transform="translate(91.9 940) scale(0.93 1)" font-size="20" font-weight="normal" fill="#d8d9da" text-anchor="end" stroke="#d8d9da" stroke-width="0.45">0 B</text>
<text x="102.3" y="962.3" font-size="20" font-weight="normal" fill="#d8d9da" text-anchor="middle" textLength="48" lengthAdjust="spacingAndGlyphs" stroke="#d8d9da" stroke-width="0.45">12:52</text>
<text x="191.39" y="962.3" font-size="20" font-weight="normal" fill="#d8d9da" text-anchor="middle" textLength="48" lengthAdjust="spacingAndGlyphs" stroke="#d8d9da" stroke-width="0.45">12:54</text>
<text x="280.48" y="962.3" font-size="20" font-weight="normal" fill="#d8d9da" text-anchor="middle" textLength="48" lengthAdjust="spacingAndGlyphs" stroke="#d8d9da" stroke-width="0.45">12:56</text>
<text x="369.57" y="962.3" font-size="20" font-weight="normal" fill="#d8d9da" text-anchor="middle" textLength="48" lengthAdjust="spacingAndGlyphs" stroke="#d8d9da" stroke-width="0.45">12:58</text>
<text x="458.66" y="962.3" font-size="20" font-weight="normal" fill="#d8d9da" text-anchor="middle" textLength="48" lengthAdjust="spacingAndGlyphs" stroke="#d8d9da" stroke-width="0.45">13:00</text>
<text x="547.75" y="962.3" font-size="20" font-weight="normal" fill="#d8d9da" text-anchor="middle" textLength="48" lengthAdjust="spacingAndGlyphs" stroke="#d8d9da" stroke-width="0.45">13:02</text>
<text x="636.84" y="962.3" font-size="20" font-weight="normal" fill="#d8d9da" text-anchor="middle" textLength="48" lengthAdjust="spacingAndGlyphs" stroke="#d8d9da" stroke-width="0.45">13:04</text>
<text x="725.93" y="962.3" font-size="20" font-weight="normal" fill="#d8d9da" text-anchor="middle" textLength="48" lengthAdjust="spacingAndGlyphs" stroke="#d8d9da" stroke-width="0.45">13:06</text>
<rect x="41.8" y="991.5" width="20.4" height="6" rx="3" fill="#84B473"/>
<text x="68" y="1000.5" font-size="21" font-weight="normal" fill="#d8d9da" text-anchor="start" textLength="56" lengthAdjust="spacingAndGlyphs" stroke="#d8d9da" stroke-width="0.45">elastic</text>
<path d="M891.4 624.9H1574.4M891.4 686.5H1574.4M891.4 748.1H1574.4M891.4 809.7H1574.4M891.4 871.3H1574.4M891.4 932.9H1574.4M895.5 624.9V932.9M986.46 624.9V932.9M1077.42 624.9V932.9M1168.38 624.9V932.9M1259.34 624.9V932.9M1350.3 624.9V932.9M1441.26 624.9V932.9M1532.22 624.9V932.9" stroke="#434345" stroke-width="1.7" fill="none"/>
<clipPath id="c7"><rect x="891.4" y="604.9" width="683" height="328"/></clipPath>
<g clip-path="url(#c7)">
<polygon points="884.13,822.9 895.5,713.38 906.87,686 918.24,768.14 929.61,768.14 940.98,768.14 952.35,795.52 963.72,795.52 975.09,768.14 986.46,768.14 997.83,740.76 1009.2,768.14 1020.57,713.38 1031.94,740.76 1043.31,740.76 1054.68,713.38 1066.05,713.38 1077.42,686 1088.79,713.38 1100.16,768.14 1111.53,768.14 1122.9,740.76 1134.27,740.76 1145.64,877.66 1157.01,768.14 1168.38,740.76 1179.75,768.14 1191.12,768.14 1202.49,740.76 1213.86,768.14 1225.23,768.14 1236.6,768.14 1247.97,740.76 1259.34,768.14 1270.71,768.14 1282.08,795.52 1293.45,768.14 1304.82,740.76 1316.19,740.76 1327.56,795.52 1338.93,768.14 1350.3,768.14 1361.67,768.14 1373.04,740.76 1384.41,795.52 1395.78,768.14 1407.15,822.9 1418.52,768.14 1429.89,740.76 1441.26,768.14 1452.63,768.14 1464,768.14 1475.37,740.76 1486.74,713.38 1498.11,713.38 1509.48,686 1520.85,686 1532.22,768.14 1543.59,850.28 1554.96,768.14 1566.33,713.38 1566.33,932.9 884.13,932.9" fill="#84B473" fill-opacity="0.1"/>
<polyline points="884.13,822.9 895.5,713.38 906.87,686 918.24,768.14 929.61,768.14 940.98,768.14 952.35,795.52 963.72,795.52 975.09,768.14 986.46,768.14 997.83,740.76 1009.2,768.14 1020.57,713.38 1031.94,740.76 1043.31,740.76 1054.68,713.38 1066.05,713.38 1077.42,686 1088.79,713.38 1100.16,768.14 1111.53,768.14 1122.9,740.76 1134.27,740.76 1145.64,877.66 1157.01,768.14 1168.38,740.76 1179.75,768.14 1191.12,768.14 1202.49,740.76 1213.86,768.14 1225.23,768.14 1236.6,768.14 1247.97,740.76 1259.34,768.14 1270.71,768.14 1282.08,795.52 1293.45,768.14 1304.82,740.76 1316.19,740.76 1327.56,795.52 1338.93,768.14 1350.3,768.14 1361.67,768.14 1373.04,740.76 1384.41,795.52 1395.78,768.14 1407.15,822.9 1418.52,768.14 1429.89,740.76 1441.26,768.14 1452.63,768.14 1464,768.14 1475.37,740.76 1486.74,713.38 1498.11,713.38 1509.48,686 1520.85,686 1532.22,768.14 1543.59,850.28 1554.96,768.14 1566.33,713.38" fill="none" stroke="#84B473" stroke-width="1.7" stroke-linejoin="miter"/>
</g>
<clipPath id="c8"><rect x="891.4" y="604.9" width="683" height="328"/></clipPath>
<g clip-path="url(#c8)">
<polyline points="891.4,932.9 1567,932.9" fill="none" stroke="#E8B845" stroke-width="1.7" stroke-linejoin="miter"/>
</g>
<text transform="translate(883.1 632) scale(0.93 1)" font-size="20" font-weight="normal" fill="#d8d9da" text-anchor="end" stroke="#d8d9da" stroke-width="0.45">500 B</text>
<text transform="translate(883.1 693.6) scale(0.93 1)" font-size="20" font-weight="normal" fill="#d8d9da" text-anchor="end" stroke="#d8d9da" stroke-width="0.45">400 B</text>
<text transform="translate(883.1 755.2) scale(0.93 1)" font-size="20" font-weight="normal" fill="#d8d9da" text-anchor="end" stroke="#d8d9da" stroke-width="0.45">300 B</text>
<text transform="translate(883.1 816.8) scale(0.93 1)" font-size="20" font-weight="normal" fill="#d8d9da" text-anchor="end" stroke="#d8d9da" stroke-width="0.45">200 B</text>
<text transform="translate(883.1 878.4) scale(0.93 1)" font-size="20" font-weight="normal" fill="#d8d9da" text-anchor="end" stroke="#d8d9da" stroke-width="0.45">100 B</text>
<text transform="translate(883.1 940) scale(0.93 1)" font-size="20" font-weight="normal" fill="#d8d9da" text-anchor="end" stroke="#d8d9da" stroke-width="0.45">0 B</text>
<text x="895.5" y="962.3" font-size="20" font-weight="normal" fill="#d8d9da" text-anchor="middle" textLength="48" lengthAdjust="spacingAndGlyphs" stroke="#d8d9da" stroke-width="0.45">12:52</text>
<text x="986.46" y="962.3" font-size="20" font-weight="normal" fill="#d8d9da" text-anchor="middle" textLength="48" lengthAdjust="spacingAndGlyphs" stroke="#d8d9da" stroke-width="0.45">12:54</text>
<text x="1077.42" y="962.3" font-size="20" font-weight="normal" fill="#d8d9da" text-anchor="middle" textLength="48" lengthAdjust="spacingAndGlyphs" stroke="#d8d9da" stroke-width="0.45">12:56</text>
<text x="1168.38" y="962.3" font-size="20" font-weight="normal" fill="#d8d9da" text-anchor="middle" textLength="48" lengthAdjust="spacingAndGlyphs" stroke="#d8d9da" stroke-width="0.45">12:58</text>
<text x="1259.34" y="962.3" font-size="20" font-weight="normal" fill="#d8d9da" text-anchor="middle" textLength="48" lengthAdjust="spacingAndGlyphs" stroke="#d8d9da" stroke-width="0.45">13:00</text>
<text x="1350.3" y="962.3" font-size="20" font-weight="normal" fill="#d8d9da" text-anchor="middle" textLength="48" lengthAdjust="spacingAndGlyphs" stroke="#d8d9da" stroke-width="0.45">13:02</text>
<text x="1441.26" y="962.3" font-size="20" font-weight="normal" fill="#d8d9da" text-anchor="middle" textLength="48" lengthAdjust="spacingAndGlyphs" stroke="#d8d9da" stroke-width="0.45">13:04</text>
<text x="1532.22" y="962.3" font-size="20" font-weight="normal" fill="#d8d9da" text-anchor="middle" textLength="48" lengthAdjust="spacingAndGlyphs" stroke="#d8d9da" stroke-width="0.45">13:06</text>
<rect x="849.3" y="991.5" width="20.4" height="6" rx="3" fill="#84B473"/>
<text x="875.5" y="1000.5" font-size="21" font-weight="normal" fill="#d8d9da" text-anchor="start" textLength="56" lengthAdjust="spacingAndGlyphs" stroke="#d8d9da" stroke-width="0.45">elastic</text>
<text x="1667.5" y="640" font-size="23.5" font-weight="bold" fill="#45b2e6" text-anchor="start" textLength="65" lengthAdjust="spacingAndGlyphs" stroke="#45b2e6" stroke-width="0.25">Metric</text>
<path d="M1737.4 629 L1750.6 629 L1744 636 Z" fill="#45b2e6"/>
<text x="1667.5" y="691.1" font-size="23" font-weight="normal" fill="#d8d9da" text-anchor="start" textLength="49.5" lengthAdjust="spacingAndGlyphs" stroke="#d8d9da" stroke-width="0.45">redis</text>
<text x="1667.5" y="745.7" font-size="23" font-weight="normal" fill="#d8d9da" text-anchor="start" textLength="67" lengthAdjust="spacingAndGlyphs" stroke="#d8d9da" stroke-width="0.45">elastic</text>
<path d="M1630 552 L1675 552 L1630 597 Z" fill="#303034"/>
<path d="M1641.3 559h4.2v3h-4.2z M1640.6 563.6h4.6v6h1.5v1.9h-6.6v-1.9h1.6v-4.1h-1.1z" fill="#9a9a9c"/>
<path d="M67.6 1111.4H2353M67.6 1198.55H2353M67.6 1285.7H2353M67.6 1372.85H2353M67.6 1460H2353M78.2 1111.4V1460M230.56 1111.4V1460M382.92 1111.4V1460M535.28 1111.4V1460M687.64 1111.4V1460M840 1111.4V1460M992.36 1111.4V1460M1144.72 1111.4V1460M1297.08 1111.4V1460M1449.44 1111.4V1460M1601.8 1111.4V1460M1754.16 1111.4V1460M1906.52 1111.4V1460M2058.88 1111.4V1460M2211.24 1111.4V1460" stroke="#434345" stroke-width="1.7" fill="none"/>
<path d="M67.6 1285.4H2325.8" stroke="#C8692B" stroke-width="2"/>
<text transform="translate(58.3 1118.5) scale(0.93 1)" font-size="20" font-weight="normal" fill="#d8d9da" text-anchor="end" stroke="#d8d9da" stroke-width="0.45">1.0</text>
<text transform="translate(58.3 1205.65) scale(0.93 1)" font-size="20" font-weight="normal" fill="#d8d9da" text-anchor="end" stroke="#d8d9da" stroke-width="0.45">0.5</text>
<text transform="translate(58.3 1292.8) scale(0.93 1)" font-size="20" font-weight="normal" fill="#d8d9da" text-anchor="end" stroke="#d8d9da" stroke-width="0.45">0</text>
<text transform="translate(58.3 1379.95) scale(0.93 1)" font-size="20" font-weight="normal" fill="#d8d9da" text-anchor="end" stroke="#d8d9da" stroke-width="0.45">-0.5</text>
<text transform="translate(58.3 1467.1) scale(0.93 1)" font-size="20" font-weight="normal" fill="#d8d9da" text-anchor="end" stroke="#d8d9da" stroke-width="0.45">-1.0</text>
<text x="78.2" y="1490" font-size="20" font-weight="normal" fill="#d8d9da" text-anchor="middle" textLength="48" lengthAdjust="spacingAndGlyphs" stroke="#d8d9da" stroke-width="0.45">12:52</text>
<text x="230.56" y="1490" font-size="20" font-weight="normal" fill="#d8d9da" text-anchor="middle" textLength="48" lengthAdjust="spacingAndGlyphs" stroke="#d8d9da" stroke-width="0.45">12:53</text>
<text x="382.92" y="1490" font-size="20" font-weight="normal" fill="#d8d9da" text-anchor="middle" textLength="48" lengthAdjust="spacingAndGlyphs" stroke="#d8d9da" stroke-width="0.45">12:54</text>
<text x="535.28" y="1490" font-size="20" font-weight="normal" fill="#d8d9da" text-anchor="middle" textLength="48" lengthAdjust="spacingAndGlyphs" stroke="#d8d9da" stroke-width="0.45">12:55</text>
<text x="687.64" y="1490" font-size="20" font-weight="normal" fill="#d8d9da" text-anchor="middle" textLength="48" lengthAdjust="spacingAndGlyphs" stroke="#d8d9da" stroke-width="0.45">12:56</text>
<text x="840" y="1490" font-size="20" font-weight="normal" fill="#d8d9da" text-anchor="middle" textLength="48" lengthAdjust="spacingAndGlyphs" stroke="#d8d9da" stroke-width="0.45">12:57</text>
<text x="992.36" y="1490" font-size="20" font-weight="normal" fill="#d8d9da" text-anchor="middle" textLength="48" lengthAdjust="spacingAndGlyphs" stroke="#d8d9da" stroke-width="0.45">12:58</text>
<text x="1144.72" y="1490" font-size="20" font-weight="normal" fill="#d8d9da" text-anchor="middle" textLength="48" lengthAdjust="spacingAndGlyphs" stroke="#d8d9da" stroke-width="0.45">12:59</text>
<text x="1297.08" y="1490" font-size="20" font-weight="normal" fill="#d8d9da" text-anchor="middle" textLength="48" lengthAdjust="spacingAndGlyphs" stroke="#d8d9da" stroke-width="0.45">13:00</text>
<text x="1449.44" y="1490" font-size="20" font-weight="normal" fill="#d8d9da" text-anchor="middle" textLength="48" lengthAdjust="spacingAndGlyphs" stroke="#d8d9da" stroke-width="0.45">13:01</text>
<text x="1601.8" y="1490" font-size="20" font-weight="normal" fill="#d8d9da" text-anchor="middle" textLength="48" lengthAdjust="spacingAndGlyphs" stroke="#d8d9da" stroke-width="0.45">13:02</text>
<text x="1754.16" y="1490" font-size="20" font-weight="normal" fill="#d8d9da" text-anchor="middle" textLength="48" lengthAdjust="spacingAndGlyphs" stroke="#d8d9da" stroke-width="0.45">13:03</text>
<text x="1906.52" y="1490" font-size="20" font-weight="normal" fill="#d8d9da" text-anchor="middle" textLength="48" lengthAdjust="spacingAndGlyphs" stroke="#d8d9da" stroke-width="0.45">13:04</text>
<text x="2058.88" y="1490" font-size="20" font-weight="normal" fill="#d8d9da" text-anchor="middle" textLength="48" lengthAdjust="spacingAndGlyphs" stroke="#d8d9da" stroke-width="0.45">13:05</text>
<text x="2211.24" y="1490" font-size="20" font-weight="normal" fill="#d8d9da" text-anchor="middle" textLength="48" lengthAdjust="spacingAndGlyphs" stroke="#d8d9da" stroke-width="0.45">13:06</text>
</svg>
</body></html>
